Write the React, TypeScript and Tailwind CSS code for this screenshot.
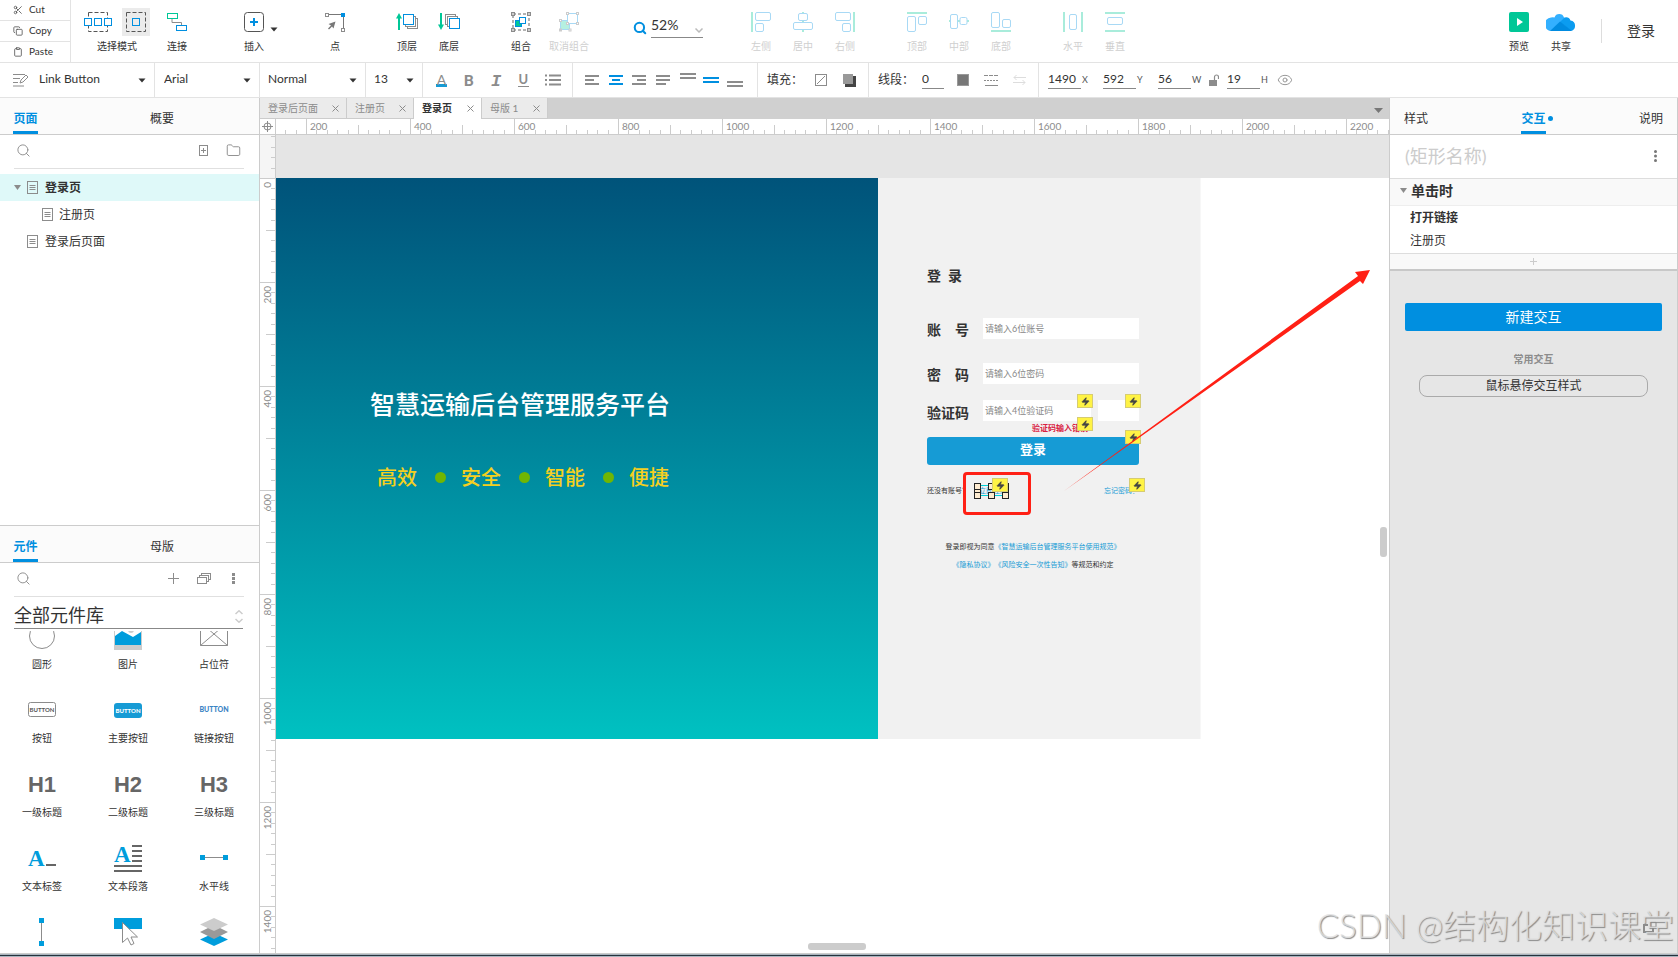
import React from 'react';
import { Scissors, Copy, Clipboard, Search, Zap, Eye, Folder } from 'lucide-react';

const BLUE = '#008fe0';
const GREEN = '#00c797';
const GRAY = '#8c8c8c';

interface ToolProps {
  label: string;
  disabled?: boolean;
  wide?: boolean;
  children: React.ReactNode;
}

function Tool({ label, disabled, wide, children }: ToolProps) {
  return (
    <button
      disabled={disabled}
      className={`${wide ? 'w-[54px]' : 'w-[42px]'} ${disabled ? 'text-[#cfcfcf]' : 'text-[#333]'} relative flex flex-col items-center pt-3 shrink-0`}
    >
      <span className="h-5 flex justify-center">{children}</span>
      <span className="mt-2 text-[10px] leading-3 whitespace-nowrap">{label}</span>
    </button>
  );
}

function Caret({ className = '' }: { className?: string }) {
  return (
    <svg width="8" height="5" viewBox="0 0 8 5" className={className}>
      <path d="M0.5 0.5h7L4 4.5z" fill="#333" />
    </svg>
  );
}

function AlignIcon({ kind }: { kind: string }) {
  const bar = { stroke: '#a9ecdb', strokeWidth: 2 };
  const box = { stroke: '#a8d9f5', strokeWidth: 1, fill: '#fff' };
  return (
    <svg width="20" height="20" viewBox="0 0 20 20" fill="none">
      {kind === 'left' && <><path d="M1 0v20" {...bar} /><rect x="4.5" y=".5" width="15" height="8" rx="1.5" {...box} /><rect x="4.5" y="11.5" width="8" height="8" rx="1.5" {...box} /></>}
      {kind === 'center' && <><path d="M10 0v20" {...bar} /><rect x="5.5" y="1.5" width="9" height="7" rx="1.5" {...box} /><rect x=".5" y="10.5" width="19" height="7" rx="1.5" {...box} /></>}
      {kind === 'right' && <><path d="M19 0v20" {...bar} /><rect x=".5" y=".5" width="15" height="8" rx="1.5" {...box} /><rect x="7.5" y="11.5" width="8" height="8" rx="1.5" {...box} /></>}
      {kind === 'top' && <><path d="M0 1h20" {...bar} /><rect x=".5" y="4.5" width="8" height="15" rx="1.5" {...box} /><rect x="11.5" y="4.5" width="8" height="8" rx="1.5" {...box} /></>}
      {kind === 'middle' && <><path d="M0 9h20" {...bar} /><rect x="1.5" y="2.5" width="7" height="14" rx="1.5" {...box} /><rect x="11" y="5.5" width="7" height="7" rx="1.5" {...box} /></>}
      {kind === 'bottom' && <><path d="M0 19h20" {...bar} /><rect x=".5" y=".5" width="8" height="15" rx="1.5" {...box} /><rect x="11.5" y="7.5" width="8" height="8" rx="1.5" {...box} /></>}
      {kind === 'horizontal' && <><path d="M1 0v20M19 0v20" {...bar} /><rect x="6.5" y="2.5" width="7" height="15" rx="1.5" {...box} /></>}
      {kind === 'vertical' && <><path d="M0 1h20M0 19h20" {...bar} /><rect x="2.5" y="5.5" width="15" height="7" rx="1.5" {...box} /></>}
    </svg>
  );
}

function TopBar() {
  return (
    <header className="h-[63px] shrink-0 flex border-b border-[#e3e3e3] bg-white">
      <div className="w-[71px] shrink-0 flex flex-col border-r border-[#e3e3e3] text-[10px] text-[#333]">
        <button className="flex-1 flex items-center gap-[6px] pl-[13px] pb-px border-b border-[#e3e3e3]">
          <Scissors size={10} className="text-[#555]" />Cut
        </button>
        <button className="flex-1 flex items-center gap-[6px] pl-[13px] pb-px border-b border-[#e3e3e3]">
          <Copy size={10} className="text-[#555]" />Copy
        </button>
        <button className="flex-1 flex items-center gap-[6px] pl-[13px] pb-px">
          <Clipboard size={10} className="text-[#555]" />Paste
        </button>
      </div>

      <div className="ml-[13px] w-[66px] shrink-0 flex flex-col pt-2 text-[#333]">
        <div className="flex justify-between">
          <button aria-label="相交选中" className="h-7 flex items-center">
            <svg width="28" height="20" viewBox="0 0 28 20" fill="none">
              <rect x="4.5" y=".5" width="19" height="19" stroke="#555" strokeDasharray="4 2" />
              <g stroke={BLUE} fill="#fff">
                <rect x=".5" y="6.5" width="7" height="7" />
                <rect x="10.5" y="6.5" width="7" height="7" />
                <rect x="20.5" y="6.5" width="7" height="7" />
              </g>
            </svg>
          </button>
          <button aria-label="包含选中" className="w-7 h-7 bg-[#ebebeb] flex items-center justify-center">
            <svg width="20" height="20" viewBox="0 0 20 20" fill="none">
              <rect x=".5" y=".5" width="19" height="19" stroke="#555" strokeDasharray="4 2" />
              <rect x="6.5" y="6.5" width="7" height="7" stroke={BLUE} />
            </svg>
          </button>
        </div>
        <span className="mt-1 text-[10px] leading-3 text-center">选择模式</span>
      </div>

      <div className="ml-[6px] flex">
        <Tool label="连接">
          <svg width="20" height="20" viewBox="0 0 20 20" fill="none">
            <path d="M5 6v4.5h9.5V13" stroke={GRAY} />
            <rect x=".5" y="1.5" width="10" height="5" stroke={GREEN} />
            <rect x="9.5" y="13.5" width="10" height="5" stroke={BLUE} />
          </svg>
        </Tool>
      </div>
      <div className="ml-[35px] flex relative">
        <Tool label="插入">
          <svg width="20" height="20" viewBox="0 0 20 20" fill="none">
            <rect x=".5" y=".5" width="19" height="19" rx="3" stroke="#555" />
            <path d="M6 10h8M10 6v8" stroke={BLUE} strokeWidth="2" />
          </svg>
        </Tool>
        <Caret className="absolute left-[37px] top-[27px]" />
      </div>
      <div className="ml-[39px] flex">
        <Tool label="点">
          <svg width="20" height="20" viewBox="0 0 20 20" fill="none">
            <path d="M3 2.5h15.5V17" stroke="#777" />
            <rect x=".5" y="1.5" width="3" height="3" stroke={GRAY} fill="#fff" />
            <rect x="16.5" y="16.5" width="3" height="3" stroke={GRAY} fill="#fff" />
            <rect x="16" y="1" width="4" height="4" fill={BLUE} />
            <path d="M10.5 9.5L8.5 16.5 7 14.500 4 17.500 3 16.500l3-3-2.500-1.500z" fill="#777" />
          </svg>
        </Tool>
      </div>
      <div className="ml-[30px] flex">
        <Tool label="顶层">
          <svg width="22" height="20" viewBox="0 0 22 20" fill="none">
            <path d="M3 18V4" stroke={GREEN} strokeWidth="2" />
            <path d="M0 6.5L3 1l3 5.5z" fill={GREEN} />
            <g stroke={GRAY} fill="#fff">
              <rect x="11.5" y="6.5" width="10" height="10" />
              <rect x="9.5" y="4.5" width="10" height="10" />
            </g>
            <rect x="7.5" y="2.5" width="10" height="10" stroke={BLUE} fill="#fff" />
          </svg>
        </Tool>
        <Tool label="底层">
          <svg width="22" height="20" viewBox="0 0 22 20" fill="none">
            <path d="M3 1v14" stroke={GREEN} strokeWidth="2" />
            <path d="M0 12.5L3 18l3-5.5z" fill={GREEN} />
            <g stroke={GRAY} fill="#fff">
              <rect x="7.5" y="2.5" width="10" height="10" />
              <rect x="9.5" y="4.5" width="10" height="10" />
            </g>
            <rect x="11.5" y="6.5" width="10" height="10" stroke={BLUE} fill="#fff" />
          </svg>
        </Tool>
      </div>
      <div className="ml-[30px] flex">
        <Tool label="组合">
          <svg width="20" height="20" viewBox="0 0 20 20" fill="none">
            <rect x="2" y="2" width="16" height="16" stroke="#666" strokeDasharray="3 2" />
            <g stroke={GRAY} fill="#ccc">
              <rect x=".5" y=".5" width="3" height="3" />
              <rect x="16.5" y=".5" width="3" height="3" />
              <rect x=".5" y="16.5" width="3" height="3" />
              <rect x="16.5" y="16.5" width="3" height="3" />
            </g>
            <rect x="4.5" y="8.5" width="6" height="6" fill={GREEN} stroke={BLUE} />
            <rect x="8.5" y="5.5" width="6" height="6" fill="#fff" stroke={BLUE} />
          </svg>
        </Tool>
        <Tool label="取消组合" disabled wide>
          <svg width="20" height="20" viewBox="0 0 20 20" fill="none">
            <rect x="1.5" y="8.5" width="9" height="9" fill="#b5f0e0" stroke="#a8d9f5" />
            <rect x="8.5" y="1.5" width="10" height="10" fill="#fff" stroke="#a8d9f5" />
            <g stroke="#ccc" fill="#fff">
              <rect x="7.5" y=".5" width="2" height="2" />
              <rect x="17.5" y=".5" width="2" height="2" />
              <rect x="17.5" y="10.5" width="2" height="2" />
              <rect x="7.5" y="10.5" width="2" height="2" />
              <rect x=".5" y="7.5" width="2" height="2" />
              <rect x=".5" y="17" width="2" height="2" />
              <rect x="10" y="17" width="2" height="2" />
            </g>
          </svg>
        </Tool>
      </div>

      <div className="ml-[37px] w-[71px] shrink-0 flex items-start gap-1 pt-[15px]">
        <Search size={14} strokeWidth={3.5} className="mt-[6px] text-[#008fe0] shrink-0" />
        <div className="w-[52px] h-[23px] flex items-start border-b border-[#888] relative">
          <input aria-label="缩放" defaultValue="52%" className="w-10 text-sm leading-5 text-[#333] outline-none" />
          <svg width="8" height="5" viewBox="0 0 8 5" fill="none" className="mt-[13px] ml-auto">
            <path d="M.5.5L4 4l3.5-3.5" stroke="#bbb" strokeWidth="1.5" />
          </svg>
        </div>
      </div>

      <div className="ml-[36px] flex">
        <Tool label="左侧" disabled><AlignIcon kind="left" /></Tool>
        <Tool label="居中" disabled><AlignIcon kind="center" /></Tool>
        <Tool label="右侧" disabled><AlignIcon kind="right" /></Tool>
      </div>
      <div className="ml-[30px] flex">
        <Tool label="顶部" disabled><AlignIcon kind="top" /></Tool>
        <Tool label="中部" disabled><AlignIcon kind="middle" /></Tool>
        <Tool label="底部" disabled><AlignIcon kind="bottom" /></Tool>
      </div>
      <div className="ml-[30px] flex">
        <Tool label="水平" disabled><AlignIcon kind="horizontal" /></Tool>
        <Tool label="垂直" disabled><AlignIcon kind="vertical" /></Tool>
      </div>

      <div className="ml-auto flex">
        <Tool label="预览">
          <svg width="20" height="20" viewBox="0 0 20 20">
            <rect width="20" height="20" rx="2" fill={GREEN} />
            <path d="M8 6l6 4-6 4z" fill="#fff" />
          </svg>
        </Tool>
        <Tool label="共享">
          <svg width="30" height="20" viewBox="0 0 30 20">
            <path d="M6 19a6 6 0 0 1-1-13.500 5 5 0 0 1 3.500 0 5 5 0 0 1 9.500 0l4 5z" fill="#33b0ff" />
            <path d="M14 10l4.500-4.500a5 5 0 0 1 6 3 5.300 5.300 0 0 1 0 10.500z" fill="#0b9cf0" />
            <path d="M4 19l10-9.500 12 9.500z" fill="#008be0" />
          </svg>
        </Tool>
        <div className="ml-[19px] mt-[19px] w-px h-6 bg-[#ddd]" />
        <button className="pl-[25px] pr-[23px] text-sm text-[#333]">登录</button>
      </div>
    </header>
  );
}

function StyleSelect({ label, value, className }: { label: string; value: string; className: string }) {
  return (
    <div className={`${className} relative flex items-center border-r border-[#e3e3e3] shrink-0`}>
      <select aria-label={label} className="w-full h-full pb-[2px] appearance-none bg-transparent text-xs text-[#333] outline-none">
        <option>{value}</option>
      </select>
      <Caret className="absolute right-2 top-[15px] pointer-events-none" />
    </div>
  );
}

function NumberField({ label, value }: { label: string; value: string }) {
  return (
    <label className="flex items-center text-[9px] text-[#555]">
      <input defaultValue={value} className="w-[33px] h-[18px] pb-[2px] border-b border-[#888] text-xs text-[#333] outline-none" />
      <span className="w-[10px] pl-px">{label}</span>
    </label>
  );
}

function Lines({ d, color = GRAY }: { d: string; color?: string }) {
  return (
    <button aria-label="对齐" className="shrink-0">
      <svg width="16" height="16" viewBox="0 0 16 16" fill="none">
        <path d={d} stroke={color} strokeWidth="2" />
      </svg>
    </button>
  );
}

function StyleBar() {
  return (
    <div className="h-[35px] shrink-0 flex border-b border-[#e3e3e3] bg-white">
      <div className="pl-[13px] flex items-center">
        <svg width="16" height="14" viewBox="0 0 16 14" fill="none" stroke={GRAY}>
          <path d="M0 1.5h12M0 5.5h7M0 9.5h5M0 13h11" />
          <path d="M7 10l1-3 5-5 2 2-5 5z" />
        </svg>
      </div>
      <StyleSelect label="样式" value="Link Button" className="w-[126px] pl-[10px]" />
      <StyleSelect label="字体" value="Arial" className="w-[105px] pl-[9px]" />
      <StyleSelect label="字重" value="Normal" className="w-[106px] pl-[8px]" />
      <StyleSelect label="字号" value="13" className="w-[57px] pl-[8px]" />

      <div className="w-[150px] shrink-0 flex items-center justify-between pl-[13px] pr-[11px] border-r border-[#e3e3e3] text-[#8c8c8c]">
        <button className="w-[11px] h-[13px] text-sm leading-[11px] border-b-3 border-[#169bd5] flex justify-center">A</button>
        <button className="w-[11px] text-[15px] leading-4 font-black">B</button>
        <button className="w-[11px] pt-[3px] text-[17px] leading-4 font-bold italic font-['Liberation_Mono']">I</button>
        <button className="w-[11px] text-[13px] leading-[13px] font-bold border-b border-[#8c8c8c]">U</button>
        <button aria-label="列表">
          <svg width="16" height="12" viewBox="0 0 16 12" fill="none" stroke={GRAY} strokeWidth="2">
            <path d="M0 1.5h2M4 1.5h12M0 6h2M4 6h12M0 10.5h2M4 10.5h12" />
          </svg>
        </button>
      </div>

      <div className="w-[185px] shrink-0 flex items-center justify-between pl-3 pr-[14px] border-r border-[#e3e3e3]">
        <Lines d="M0 4h14M0 8h9M0 12h14" />
        <Lines d="M0 4h14M3 8h8M0 12h14" color={BLUE} />
        <Lines d="M0 4h14M5 8h9M0 12h14" />
        <Lines d="M0 4h14M0 8h14M0 12h10" />
        <Lines d="M0 2h16M0 6h16" />
        <Lines d="M0 6h16M0 10h16" color={BLUE} />
        <Lines d="M0 10h16M0 14h16" />
      </div>

      <div className="w-[111px] shrink-0 flex items-center pl-[9px] border-r border-[#e3e3e3] text-xs text-[#333]">
        <span className="w-[48px]">填充：</span>
        <button aria-label="填充颜色">
          <svg width="12" height="12" viewBox="0 0 12 12" fill="none" stroke={GRAY}>
            <rect x=".5" y=".5" width="11" height="11" /><path d="M2 10l8-8" />
          </svg>
        </button>
        <button aria-label="阴影" className="ml-4">
          <svg width="13" height="13" viewBox="0 0 13 13">
            <rect x="2" y="2" width="11" height="11" fill="#444" /><rect width="10" height="10" fill="#999" />
          </svg>
        </button>
      </div>

      <div className="w-[170px] shrink-0 flex items-center pl-[9px] border-r border-[#e3e3e3] text-xs text-[#333]">
        <span className="w-[44px]">线段：</span>
        <input aria-label="线宽" defaultValue="0" className="w-[22px] h-[18px] pb-[2px] border-b border-[#888] text-xs outline-none" />
        <button aria-label="线段颜色" className="ml-[13px] w-3 h-3 bg-[#777] border border-[#999]" />
        <svg width="15" height="12" viewBox="0 0 15 12" className="ml-[15px]" fill="none" stroke={GRAY}>
          <path d="M0 1.5h15" strokeDasharray="4 1" /><path d="M0 6.5h15" strokeDasharray="2 1" /><path d="M1 11.5h13" />
        </svg>
        <svg width="13" height="12" viewBox="0 0 13 12" className="ml-[14px]" fill="none" stroke="#ddd">
          <path d="M13 3.5H1M3.5 1L1 3.5 3.5 6M0 8.5h12M9.5 6L12 8.5 9.5 11" />
        </svg>
      </div>

      <div className="flex items-center pl-[9px]">
        <NumberField label="X" value="1490" />
        <span className="w-3" />
        <NumberField label="Y" value="592" />
        <span className="w-3" />
        <NumberField label="W" value="56" />
        <svg width="10" height="12" viewBox="0 0 10 12" className="mx-2">
          <path d="M0 6h8v6H0z" fill={GRAY} /><path d="M5.5 6V3a2 2 0 0 1 4 0v2" fill="none" stroke={GRAY} strokeWidth="1.2" />
        </svg>
        <NumberField label="H" value="19" />
        <Eye size={16} strokeWidth={1.5} className="ml-[7px] text-[#999]" />
      </div>
    </div>
  );
}

function PanelTabs({ first, second }: { first: string; second: string }) {
  return (
    <div className="h-[37px] shrink-0 flex pl-[13px] bg-[#fbfbfb] border-b border-[#ccc] text-xs">
      <button className="w-[25px] pt-[9px] font-bold text-[#008fe0] border-b-3 border-[#008fe0]">{first}</button>
      <button className="ml-[112px] pt-[9px] pb-[3px] text-[#333]">{second}</button>
    </div>
  );
}

function PageIcon() {
  return (
    <svg width="11" height="13" viewBox="0 0 11 13" fill="none" stroke={GRAY} className="shrink-0">
      <rect x=".5" y=".5" width="10" height="12" /><path d="M2.5 4.5h6M2.5 6.5h6M2.5 8.5h6" />
    </svg>
  );
}

function PagesPanel() {
  return (
    <section className="flex-1 min-h-0 flex flex-col">
      <PanelTabs first="页面" second="概要" />
      <div className="h-[34px] ml-[14px] mr-[15px] flex items-center border-b border-[#e0e0e0] pb-[2px] pl-[2px] pr-[3px] text-[#8c8c8c] shrink-0">
        <Search size={15} strokeWidth={1.5} />
        <button aria-label="新增页面" className="ml-auto">
          <svg width="9" height="11" viewBox="0 0 9 11" fill="none" stroke={GRAY}>
            <rect x=".5" y=".5" width="8" height="10" /><path d="M2 5.5h5M4.5 3v5" />
          </svg>
        </button>
        <button aria-label="新增文件夹" className="ml-[18px]"><Folder size={15} strokeWidth={1.5} /></button>
      </div>
      <ul className="mt-[5px] text-xs text-[#333]">
        <li className="h-[27px] pl-[14px] flex items-center bg-[#dff9f9] font-bold">
          <svg width="7" height="5" viewBox="0 0 7 5" className="mr-[6px]"><path d="M0 0h7L3.5 5z" fill={GRAY} /></svg>
          <PageIcon /><span className="ml-[7px]">登录页</span>
        </li>
        <li className="h-[27px] pl-[42px] flex items-center"><PageIcon /><span className="ml-[6px]">注册页</span></li>
        <li className="h-[27px] pl-[27px] flex items-center"><PageIcon /><span className="ml-[7px]">登录后页面</span></li>
      </ul>
    </section>
  );
}

const widgets = [
  { key: 'ellipse', label: '圆形', icon: <circle cx="14" cy="14" r="12.5" fill="none" stroke={GRAY} /> },
  { key: 'image', label: '图片', icon: <><rect width="28" height="28" fill="#ccc" /><path d="M1 1h26v17H1z" fill="#fff" /><circle cx="17" cy="8" r="3" fill="#ccc" /><path d="M1 14l7-5 11 6 8-5v13H1z" fill="#009ddc" /></> },
  { key: 'placeholder', label: '占位符', icon: <path d="M.5.5h27v23H.5zL27.5 23.5M27.5.5L.5 23.5" fill="none" stroke={GRAY} /> },
  { key: 'button', label: '按钮', icon: <><rect x=".5" y="6.5" width="27" height="14" rx="2" fill="none" stroke={GRAY} /><text x="14" y="16" fontSize="6" fontWeight="700" textAnchor="middle" fill="#555">BUTTON</text></> },
  { key: 'primary', label: '主要按钮', icon: <><rect y="7" width="28" height="15" rx="3" fill="#169bd5" /><text x="14" y="17" fontSize="6" fontWeight="900" textAnchor="middle" fill="#fff">BUTTON</text></> },
  { key: 'link', label: '链接按钮', icon: <text x="14" y="16" fontSize="7" fontWeight="900" textAnchor="middle" fill="#3a83c4">BUTTON</text> },
  { key: 'h1', label: '一级标题', icon: <text x="14" y="22" fontSize="22" className="font-['Liberation_Sans']" fontWeight="700" textAnchor="middle" fill="#666">H1</text> },
  { key: 'h2', label: '二级标题', icon: <text x="14" y="22" fontSize="22" className="font-['Liberation_Sans']" fontWeight="700" textAnchor="middle" fill="#666">H2</text> },
  { key: 'h3', label: '三级标题', icon: <text x="14" y="22" fontSize="22" className="font-['Liberation_Sans']" fontWeight="700" textAnchor="middle" fill="#666">H3</text> },
  { key: 'label', label: '文本标签', icon: <><text x="0" y="22" fontSize="23" className="font-['Liberation_Serif']" fontWeight="700" fill="#009ddc">A</text><path d="M18 21h10" stroke="#666" strokeWidth="2" /></> },
  { key: 'paragraph', label: '文本段落', icon: <><text x="0" y="18" fontSize="23" className="font-['Liberation_Serif']" fontWeight="700" fill="#009ddc">A</text><path d="M18 2h10M18 7h10M18 12h10M18 17h10M0 22h28M0 27h28" stroke="#666" strokeWidth="2" /></> },
  { key: 'hline', label: '水平线', icon: <><path d="M2 13.5h24" stroke={GRAY} /><path d="M0 11h5v5H0zM23 11h5v5h-5z" fill="#009ddc" /></> },
  { key: 'vline', icon: <><path d="M13.5 2v24" stroke={GRAY} /><path d="M11 0h5v5h-5zM11 23h5v5h-5z" fill="#009ddc" /></> },
  { key: 'hotspot', icon: <><rect width="28" height="11" fill="#009ddc" /><path d="M8.5 4.5v20l5-4.5 3.5 7 3-1.5-3-6.5h6.5z" fill="#fff" stroke={GRAY} /></> },
  { key: 'dynamic', icon: <><path d="M14 15l14 6.5L14 28 0 21.5z" fill="#009ddc" /><path d="M14 7l14 7-14 7-14-7z" fill="#999" /><path d="M14 0l14 6.5L14 13 0 6.5z" fill="#ccc" /></> },
];

function WidgetsPanel() {
  return (
    <section className="flex-1 min-h-0 flex flex-col border-t border-[#ccc]">
      <PanelTabs first="元件" second="母版" />
      <div className="h-[34px] ml-[14px] mr-[15px] flex items-center border-b border-[#e0e0e0] pb-[2px] pl-[2px] pr-[9px] text-[#8c8c8c] shrink-0">
        <Search size={15} strokeWidth={1.5} />
        <button aria-label="添加元件库" className="ml-auto">
          <svg width="11" height="11" viewBox="0 0 11 11" stroke={GRAY}><path d="M0 5.5h11M5.5 0v11" /></svg>
        </button>
        <button aria-label="元件库列表" className="ml-[18px]">
          <svg width="14" height="11" viewBox="0 0 14 11" fill="#fff" stroke={GRAY}>
            <rect x="4.5" y=".5" width="9" height="6" /><rect x="2.5" y="2.5" width="9" height="6" /><rect x=".5" y="4.5" width="9" height="6" />
          </svg>
        </button>
        <button aria-label="更多" className="ml-[21px]">
          <svg width="3" height="11" viewBox="0 0 3 11" fill={GRAY}><path d="M0 0h3v3H0zM0 4h3v3H0zM0 8h3v3H0z" /></svg>
        </button>
      </div>
      <div className="h-8 ml-[14px] mr-4 shrink-0 relative border-b border-[#888]">
        <select aria-label="元件库" className="w-full h-full pt-1 appearance-none bg-transparent text-lg leading-6 text-[#333] outline-none">
          <option>全部元件库</option>
        </select>
        <svg width="8" height="13" viewBox="0 0 8 13" fill="none" stroke="#ccc" strokeWidth="1.5" className="absolute right-0 top-[13px] pointer-events-none">
          <path d="M.5 4L4 .8 7.5 4M.5 9L4 12.2 7.5 9" />
        </svg>
      </div>
      <div className="mt-[2px] flex-1 min-h-0 overflow-hidden">
        <div className="-mt-[9px] -ml-px grid grid-cols-[86px_86px_86px]">
          {widgets.map((w) => (
            <div key={w.key} className="h-[74px] flex flex-col items-center text-[10px] text-[#333]">
              <svg width="28" height="28" viewBox="0 0 28 28" className="shrink-0 overflow-visible">{w.icon}</svg>
              {w.label && <span className="mt-2 leading-3">{w.label}</span>}
            </div>
          ))}
        </div>
      </div>
    </section>
  );
}

const tabs = [
  { name: '登录后页面', width: 'w-[87px]' },
  { name: '注册页', width: 'w-[67px]' },
  { name: '登录页', width: 'w-[68px]', active: true },
  { name: '母版 1', width: 'w-[66px]' },
];

const minorTicks = [1, 2, 3, 4, 6, 7, 8, 9];

function TopSegment({ value }: { value?: number }) {
  return (
    <div className="w-[104px] h-[15px] shrink-0 relative border-l border-[#ccc] text-[10px] leading-3 text-[#8c8c8c]">
      <svg width="104" height="15" className="absolute left-[-1px] top-0" stroke="#ccc" shapeRendering="crispEdges">
        {minorTicks.map((n) => <path key={n} d={`M${Math.round(n * 10.4) + 0.5} 11v4`} />)}
        <path d="M52.5 6v9" />
      </svg>
      <span className="relative pl-[3px] top-px">{value}</span>
    </div>
  );
}

function SideSegment({ value }: { value?: number }) {
  return (
    <div className="h-[104px] w-[15px] shrink-0 relative border-t border-[#ccc] text-[10px] leading-3 text-[#8c8c8c]">
      <svg width="15" height="104" className="absolute left-0 top-[-1px]" stroke="#ccc" shapeRendering="crispEdges">
        {minorTicks.map((n) => <path key={n} d={`M11 ${Math.round(n * 10.4) + 0.5}h4`} />)}
        <path d="M6 52.5h9" />
      </svg>
      <span className="absolute left-px top-[3px] [writing-mode:vertical-rl] rotate-180">{value}</span>
    </div>
  );
}

const badges = [
  'left-[801px] top-[216px]',
  'left-[849px] top-[216px]',
  'left-[801px] top-[239px]',
  'left-[849px] top-[252px]',
  'left-[716px] top-[300px]',
  'left-[853px] top-[300px]',
];

function LoginForm() {
  return (
    <form className="w-[323px] bg-[#f1f1f1] border-r border-[#f7f7f7] pl-[49px] pr-[61px] pt-[88px] text-[#333]">
      <h2 className="h-5 text-sm leading-5 font-bold">登&ensp;录</h2>
      <div className="mt-8 flex items-end justify-between">
        <label htmlFor="account" className="text-sm leading-[18px] font-bold">账　号</label>
        <input id="account" placeholder="请输入6位账号" className="w-[156px] h-[21px] px-[2px] bg-white text-[9px] placeholder:text-[#888] outline-none" />
      </div>
      <div className="mt-6 flex items-end justify-between">
        <label htmlFor="password" className="text-sm leading-[18px] font-bold">密　码</label>
        <input id="password" placeholder="请输入6位密码" className="w-[156px] h-[21px] px-[2px] bg-white text-[9px] placeholder:text-[#888] outline-none" />
      </div>
      <div className="mt-4 flex items-end">
        <label htmlFor="captcha" className="text-sm leading-4 font-bold">验证码</label>
        <input id="captcha" placeholder="请输入4位验证码" className="ml-[14px] w-[108px] h-[21px] px-[2px] bg-white text-[9px] placeholder:text-[#888] outline-none" />
        <span className="ml-auto w-[41px] h-[21px] bg-white" />
      </div>
      <p className="h-4 pl-[105px] text-[8px] leading-[14px] font-bold text-[#d9203f]">验证码输入错误</p>
      <button type="button" className="w-full h-7 pb-[2px] flex items-center justify-center rounded-[3px] bg-[#169bd5] text-[13px] font-bold text-white">登录</button>
      <div className="mt-[17px] h-4 flex items-center text-[7px] whitespace-nowrap">
        <span>还没有账号？</span>
        <a href="#register" className="ml-[10px] text-[#169bd5]">立即注册</a>
        <a href="#forgot" className="ml-auto text-[#169bd5]">忘记密码？</a>
      </div>
      <p className="mt-10 h-4 flex items-center justify-center text-[7px] whitespace-nowrap">
        登录即视为同意<a href="#terms" className="text-[#169bd5]">《智慧运输后台管理服务平台使用规范》</a>
      </p>
      <p className="mt-[2px] h-4 flex items-center justify-center text-[7px] whitespace-nowrap">
        <a href="#privacy" className="text-[#169bd5]">《隐私协议》</a>
        <a href="#risk" className="text-[#169bd5]">《风险安全一次性告知》</a>等规范和约定
      </p>
    </form>
  );
}

function Artboard() {
  return (
    <div className="relative flex h-[561px]">
      <div className="w-[602px] pl-[94px] pt-[210px] bg-linear-to-b from-[#00537a] to-[#00c1c1]">
        <h1 className="text-[25px] leading-8 font-medium text-white">智慧运输后台管理服务平台</h1>
        <div className="mt-[45px] ml-[7px] flex items-center text-xl leading-6 font-medium text-[#f5d020]">
          <span>高效</span>
          <i className="ml-[18px] mr-[15px] w-[11px] h-[11px] rounded-full bg-[#70b603]" />
          <span>安全</span>
          <i className="ml-[18px] mr-[15px] w-[11px] h-[11px] rounded-full bg-[#70b603]" />
          <span>智能</span>
          <i className="ml-[18px] mr-[15px] w-[11px] h-[11px] rounded-full bg-[#70b603]" />
          <span>便捷</span>
        </div>
      </div>
      <LoginForm />

      <svg width="35" height="16" viewBox="0 0 35 16" className="absolute left-[698px] top-[305px]" fill="none">
        <path d="M3 2.5h28M3 12.5h28" stroke="#00d0d8" />
        <g fill="#fdebd0" stroke="#222">
          <rect x=".5" y="6.5" width="6" height="4" /><rect x="28.5" y="6.5" width="6" height="4" />
          <rect x=".5" y=".5" width="6" height="6" /><rect x="14.5" y=".5" width="6" height="6" /><rect x="28.5" y=".5" width="6" height="6" />
          <rect x=".5" y="9.5" width="6" height="6" /><rect x="14.5" y="9.5" width="6" height="6" /><rect x="28.5" y="9.5" width="6" height="6" />
        </g>
      </svg>
      {badges.map((position) => (
        <span key={position} className={`${position} absolute w-4 h-[14px] flex items-center justify-center bg-[#fff345] border border-[#d6cc72]`}>
          <Zap size={9} className="fill-[#444] text-[#444]" />
        </span>
      ))}
      <div className="absolute left-[687px] top-[294px] w-[68px] h-[43px] rounded-[4px] border-3 border-[#ff2015]" />
      <svg width="1112" height="340" viewBox="0 0 1112 340" className="absolute left-0 top-0 pointer-events-none">
        <path d="M788 313L1082 98l-3-4 15-2-7 14-3-3z" fill="#ff2015" />
      </svg>
    </div>
  );
}

function Workspace() {
  return (
    <main className="flex-1 min-w-0 flex flex-col bg-white">
      <div className="h-[21px] shrink-0 flex bg-[#d0d0d0] text-[10px] text-[#8c8c8c]">
        {tabs.map((tab) => (
          <div
            key={tab.name}
            className={`${tab.width} ${tab.active ? 'bg-white text-[#333] font-bold' : 'bg-[#ebebeb] border-b'} shrink-0 flex items-center justify-between pl-2 pr-[7px] border-r border-[#ccc]`}
          >
            <span>{tab.name}</span>
            <button aria-label={`关闭 ${tab.name}`}>
              <svg width="7" height="7" viewBox="0 0 7 7" stroke={GRAY}><path d="M.5.5l6 6M6.5.5l-6 6" /></svg>
            </button>
          </div>
        ))}
        <svg width="9" height="5" viewBox="0 0 9 5" className="ml-auto mr-[6px] mt-[10px]"><path d="M0 0h9L4.5 5z" fill="#777" /></svg>
      </div>

      <div className="h-4 shrink-0 flex border-b border-[#ccc] overflow-hidden">
        <div className="w-4 shrink-0 flex items-center justify-center border-r border-[#ccc]">
          <svg width="11" height="11" viewBox="0 0 11 11" fill="none" stroke={GRAY}><circle cx="5.5" cy="5.5" r="3.5" /><path d="M0 5.5h11M5.5 0v11" /></svg>
        </div>
        <div className="w-[30px] shrink-0 overflow-hidden flex justify-end"><TopSegment /></div>
        {[200, 400, 600, 800, 1000, 1200, 1400, 1600, 1800, 2000, 2200].map((v) => <TopSegment key={v} value={v} />)}
      </div>

      <div className="flex-1 min-h-0 flex">
        <div className="w-4 shrink-0 flex flex-col border-r border-[#ccc] overflow-hidden">
          <div className="h-[43px] shrink-0 overflow-hidden flex flex-col justify-end bg-[#f5f5f5]"><SideSegment /></div>
          {[0, 200, 400, 600, 800, 1000, 1200, 1400].map((v) => <SideSegment key={v} value={v} />)}
        </div>
        <div className="flex-1 min-w-0 relative overflow-hidden">
          <div className="h-[43px] bg-[#e5e5e5]" />
          <Artboard />
          <div className="absolute right-[2px] top-[392px] w-[7px] h-[30px] rounded-[3px] bg-[#ccc]" />
          <div className="absolute bottom-[3px] left-[532px] w-[58px] h-[7px] rounded-[3px] bg-[#ccc]" />
        </div>
      </div>
    </main>
  );
}

function Inspector() {
  return (
    <aside className="w-[289px] shrink-0 flex flex-col border-x border-[#ccc] bg-[#e6e6e6] text-[#333]">
      <div className="h-[37px] shrink-0 flex justify-between px-[14px] bg-[#fbfbfb] border-b border-[#ccc] text-xs">
        <button className="pt-[9px] pb-[3px]">样式</button>
        <button className="relative pt-[9px] w-[25px] font-bold text-[#008fe0] border-b-3 border-[#008fe0]">
          交互
          <i className="absolute left-[27px] top-[18px] w-[5px] h-[5px] rounded-full bg-[#008fe0]" />
        </button>
        <button className="pt-[9px] pb-[3px]">说明</button>
      </div>
      <div className="h-11 shrink-0 flex items-center justify-between pl-[15px] pr-5 pb-px bg-white border-b border-[#ddd]">
        <input aria-label="名称" placeholder="(矩形名称)" className="w-40 text-lg placeholder:text-[#ccc] outline-none" />
        <button aria-label="更多">
          <svg width="3" height="12" viewBox="0 0 3 12" fill="#777"><circle cx="1.5" cy="1.5" r="1.5" /><circle cx="1.5" cy="6" r="1.5" /><circle cx="1.5" cy="10.5" r="1.5" /></svg>
        </button>
      </div>
      <div className="h-[27px] shrink-0 flex items-center pl-[10px] pb-[3px] bg-[#f9f9f9] border-b border-[#eee]">
        <svg width="7" height="5" viewBox="0 0 7 5" className="mr-1"><path d="M0 0h7L3.5 5z" fill={GRAY} /></svg>
        <h3 className="text-sm leading-5 font-bold">单击时</h3>
      </div>
      <div className="shrink-0 pl-5 pb-[2px] bg-white text-xs">
        <p className="leading-6 font-bold">打开链接</p>
        <p className="leading-[21px]">注册页</p>
      </div>
      <button aria-label="添加动作" className="h-[18px] shrink-0 flex items-center justify-center bg-[#f9f9f9] border-t border-t-[#ddd] border-b-2 border-b-[#c8c8c8]">
        <svg width="7" height="7" viewBox="0 0 7 7" stroke="#ccc"><path d="M0 3.5h7M3.5 0v7" /></svg>
      </button>
      <div className="px-[15px] pt-8 flex flex-col items-stretch">
        <button className="h-7 rounded-[2px] bg-[#008fe0] text-sm text-white">新建交互</button>
        <span className="mt-[22px] text-center text-[10px] leading-3 font-bold text-[#8c8c8c]">常用交互</span>
        <button className="mt-[10px] mx-[14px] h-[22px] flex items-center justify-center rounded-lg border border-[#aaa] text-xs">鼠标悬停交互样式</button>
      </div>
      <button aria-label="弹出面板" className="mt-auto mb-5 mr-5 self-end">
        <svg width="14" height="12" viewBox="0 0 14 12" fill="none" stroke={GRAY} strokeWidth="2">
          <path d="M5 4H1v7h9V7" /><path d="M8 1h5v5M8 1v5h5" strokeWidth="1" />
        </svg>
      </button>
    </aside>
  );
}

export default function App() {
  return (
    <div className="h-screen overflow-hidden flex flex-col relative bg-white font-[Lato,'Noto_Sans_CJK_SC',sans-serif]">
      <TopBar />
      <StyleBar />
      <div className="flex-1 min-h-0 flex">
        <nav className="w-[260px] shrink-0 flex flex-col border-r border-[#ccc] bg-white">
          <PagesPanel />
          <WidgetsPanel />
        </nav>
        <Workspace />
        <Inspector />
      </div>
      <div className="h-1 shrink-0 border-t border-[#ccc] bg-[#a9b4be]">
        <div className="mt-px h-px bg-[#26323c]" />
      </div>
      <div className="absolute right-1 bottom-3 text-[33px] leading-10 font-light text-[#e2e2e2]/80 [text-shadow:1px_1px_1px_#888] pointer-events-none whitespace-nowrap">
        CSDN @结构化知识课堂
      </div>
    </div>
  );
}
